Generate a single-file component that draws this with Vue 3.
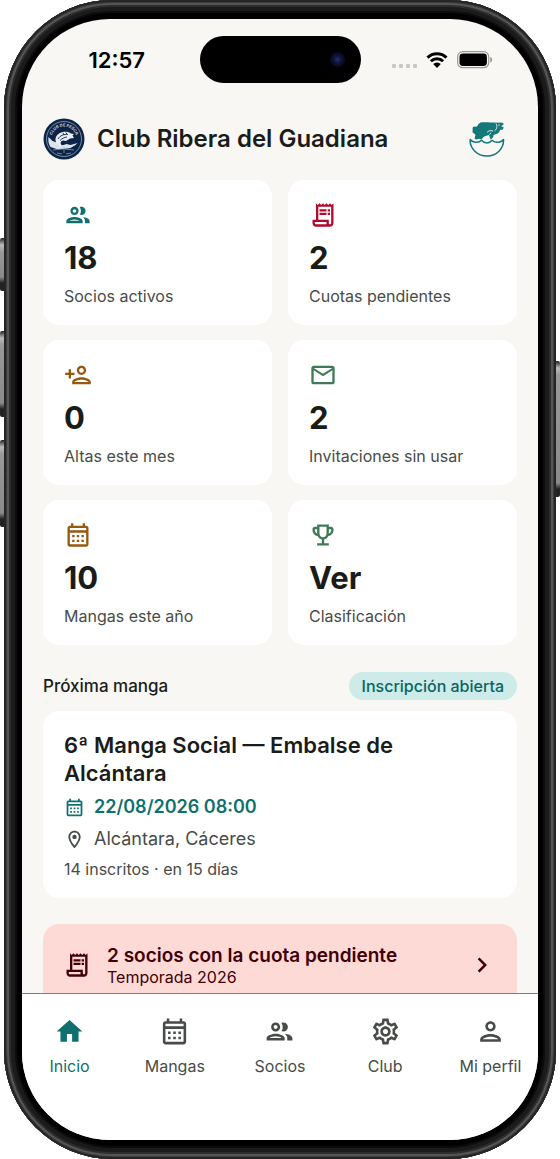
<script setup>

import {ref} from "vue"

const icons = {
    group: "M9 13.75c-2.34 0-7 1.17-7 3.5V19h14v-1.75c0-2.33-4.66-3.5-7-3.5zM4.34 17c.84-.58 2.87-1.25 4.66-1.25s3.82.67 4.66 1.25H4.34zM9 12c1.93 0 3.5-1.57 3.5-3.5S10.93 5 9 5 5.5 6.57 5.5 8.5 7.07 12 9 12zm0-5c.83 0 1.5.67 1.5 1.5S9.83 10 9 10s-1.5-.67-1.5-1.5S8.17 7 9 7zm7.04 6.81c1.16.84 1.96 1.96 1.96 3.44V19h4v-1.75c0-2.02-3.5-3.17-5.96-3.44zM15 12c1.93 0 3.5-1.57 3.5-3.5S16.93 5 15 5c-.54 0-1.04.13-1.5.35.63.89 1 1.98 1 3.15s-.37 2.26-1 3.15c.46.22.96.35 1.5.35z",
    receipt: "M19.5 3.5L18 2l-1.5 1.5L15 2l-1.5 1.5L12 2l-1.5 1.5L9 2 7.5 3.5 6 2v14H3v3c0 1.66 1.34 3 3 3h12c1.66 0 3-1.34 3-3V2l-1.5 1.5zM15 20H6c-.55 0-1-.45-1-1v-1h10v2zm4-1c0 .55-.45 1-1 1s-1-.45-1-1v-3H8V5h11v14zM9 7h6v2H9zM16 7h2v2h-2zM9 10h6v2H9zM16 10h2v2h-2z",
    personAdd: "M15 12c2.21 0 4-1.79 4-4s-1.79-4-4-4-4 1.79-4 4 1.79 4 4 4zm0-6c1.1 0 2 .9 2 2s-.9 2-2 2-2-.9-2-2 .9-2 2-2zm0 8c-2.67 0-8 1.34-8 4v2h16v-2c0-2.66-5.33-4-8-4zm-6 4c.22-.72 3.31-2 6-2 2.7 0 5.8 1.29 6 2H9zm-3-3v-3h3v-2H6V7H4v3H1v2h3v3z",
    mail: "M22 6c0-1.1-.9-2-2-2H4c-1.1 0-2 .9-2 2v12c0 1.1.9 2 2 2h16c1.1 0 2-.9 2-2V6zm-2 0l-8 5-8-5h16zm0 12H4V8l8 5 8-5v10z",
    calendar: "M19 4h-1V2h-2v2H8V2H6v2H5c-1.11 0-1.99.9-1.99 2L3 20c0 1.1.89 2 2 2h14c1.1 0 2-.9 2-2V6c0-1.1-.9-2-2-2zm0 16H5V10h14v10zm0-12H5V6h14v2zM9 14H7v-2h2v2zm4 0h-2v-2h2v2zm4 0h-2v-2h2v2zM9 18H7v-2h2v2zm4 0h-2v-2h2v2zm4 0h-2v-2h2v2z",
    trophy: "M19 5h-2V3H7v2H5c-1.1 0-2 .9-2 2v1c0 2.55 1.92 4.63 4.39 4.94.63 1.5 1.98 2.63 3.61 2.96V19H7v2h10v-2h-4v-3.1c1.63-.33 2.98-1.46 3.61-2.96C19.08 12.63 21 10.55 21 8V7c0-1.1-.9-2-2-2zM5 8V7h2v3.82C5.84 10.4 5 9.3 5 8zm7 6c-1.65 0-3-1.35-3-3V5h6v6c0 1.65-1.35 3-3 3zm7-6c0 1.3-.84 2.4-2 2.82V7h2v1z",
    place: "M12 2C8.13 2 5 5.13 5 9c0 5.25 7 13 7 13s7-7.75 7-13c0-3.87-3.13-7-7-7zM7 9c0-2.76 2.24-5 5-5s5 2.24 5 5c0 2.88-2.88 7.19-5 9.88C9.92 16.21 7 11.85 7 9zM14.5 9a2.5 2.5 0 1 1-5 0 2.5 2.5 0 0 1 5 0z",
    home: "M10 20v-6h4v6h5v-8h3L12 3 2 12h3v8z",
    settings: "M19.43 12.98c.04-.32.07-.64.07-.98 0-.34-.03-.66-.07-.98l2.11-1.65c.19-.15.24-.42.12-.64l-2-3.46c-.09-.16-.26-.25-.44-.25-.06 0-.12.01-.17.03l-2.49 1c-.52-.4-1.08-.73-1.69-.98l-.38-2.65C14.46 2.18 14.25 2 14 2h-4c-.25 0-.46.18-.49.42l-.38 2.65c-.61.25-1.17.59-1.69.98l-2.49-1c-.06-.02-.12-.03-.18-.03-.17 0-.34.09-.43.25l-2 3.46c-.13.22-.07.49.12.64l2.11 1.65c-.04.32-.07.65-.07.98 0 .33.03.66.07.98l-2.11 1.65c-.19.15-.24.42-.12.64l2 3.46c.09.16.26.25.44.25.06 0 .12-.01.17-.03l2.49-1c.52.4 1.08.73 1.69.98l.38 2.65c.03.24.24.42.49.42h4c.25 0 .46-.18.49-.42l.38-2.65c.61-.25 1.17-.59 1.69-.98l2.49 1c.06.02.12.03.18.03.17 0 .34-.09.43-.25l2-3.46c.12-.22.07-.49-.12-.64l-2.11-1.65zm-1.98-1.71c.04.31.05.52.05.73 0 .21-.02.43-.05.73l-.14 1.13.89.7 1.08.84-.7 1.21-1.27-.51-1.04-.42-.9.68c-.43.32-.84.56-1.25.73l-1.06.43-.16 1.13-.2 1.35h-1.4l-.19-1.35-.16-1.13-1.06-.43c-.43-.18-.83-.41-1.23-.71l-.91-.7-1.06.43-1.27.51-.7-1.21 1.08-.84.89-.7-.14-1.13c-.03-.31-.05-.54-.05-.74s.02-.43.05-.73l.14-1.13-.89-.7-1.08-.84.7-1.21 1.27.51 1.04.42.9-.68c.43-.32.84-.56 1.25-.73l1.06-.43.16-1.13.2-1.35h1.39l.19 1.35.16 1.13 1.06.43c.43.18.83.41 1.23.71l.91.7 1.06-.43 1.27-.51.7 1.21-1.07.85-.89.7.14 1.13zM12 8c-2.21 0-4 1.79-4 4s1.79 4 4 4 4-1.79 4-4-1.79-4-4-4zm0 6c-1.1 0-2-.9-2-2s.9-2 2-2 2 .9 2 2-.9 2-2 2z",
    person: "M12 6c1.1 0 2 .9 2 2s-.9 2-2 2-2-.9-2-2 .9-2 2-2m0 10c2.7 0 5.8 1.29 6 2H6c.23-.72 3.31-2 6-2m0-12C9.79 4 8 5.79 8 8s1.79 4 4 4 4-1.79 4-4-1.79-4-4-4zm0 10c-2.67 0-8 1.34-8 4v2h16v-2c0-2.66-5.33-4-8-4z",
    chevron: "M10 6L8.59 7.41 13.17 12l-4.58 4.59L10 18l6-6z",
}

const stats = [
    {icon: "group", color: "teal", value: "18", label: "Socios activos"},
    {icon: "receipt", color: "red", value: "2", label: "Cuotas pendientes"},
    {icon: "personAdd", color: "amber", value: "0", label: "Altas este mes"},
    {icon: "mail", color: "green", value: "2", label: "Invitaciones sin usar"},
    {icon: "calendar", color: "amber", value: "10", label: "Mangas este año"},
    {icon: "trophy", color: "green", value: "Ver", label: "Clasificación"},
]

const tabs = [
    {id: "inicio", icon: "home", label: "Inicio"},
    {id: "mangas", icon: "calendar", label: "Mangas"},
    {id: "socios", icon: "group", label: "Socios"},
    {id: "club", icon: "settings", label: "Club"},
    {id: "perfil", icon: "person", label: "Mi perfil"},
]

const active = ref("inicio")

</script>

<template>
    <div class="device">
        <!-- Side buttons of the phone -->
        <span class="key action"></span>
        <span class="key volumeUp"></span>
        <span class="key volumeDown"></span>
        <span class="key power"></span>

        <div class="frame">
            <div class="screen">
                <div class="status">
                    <span class="time">12:57</span>
                    <div class="island"><span class="lens"></span></div>
                    <div class="signals">
                        <span class="dots"><i></i><i></i><i></i><i></i></span>
                        <svg class="wifi" viewBox="0 0 22 16" aria-hidden="true">
                            <path d="M1.5 5.6a13.6 13.6 0 0 1 19 0M4.9 9.2a8.7 8.7 0 0 1 12.2 0" fill="none" stroke="#000" stroke-width="3" />
                            <path d="M11 16l-3.8-3.9a5.4 5.4 0 0 1 7.6 0z" />
                        </svg>
                        <svg class="battery" viewBox="0 0 36 18" aria-hidden="true">
                            <rect x="0.7" y="0.7" width="31" height="16" rx="5" fill="none" stroke="#999" stroke-width="1.2" />
                            <rect x="2.5" y="2.5" width="27.4" height="12.4" rx="3.4" />
                            <path d="M33.2 6v5.4c1.4-.5 2-1.5 2-2.7s-.6-2.2-2-2.7z" fill="#999" />
                        </svg>
                    </div>
                </div>

                <header>
                    <svg class="crest" viewBox="0 0 42 42" role="img" aria-label="Club de pesca">
                        <defs><path id="crestArc" d="M8.5 21a12.500 12.500 0 0 1 25 0" /></defs>
                        <circle cx="21" cy="21" r="20.5" fill="#0b2447" />
                        <circle cx="21" cy="21" r="17.5" fill="none" stroke="#a9b6c8" stroke-width="0.7" />
                        <text font-size="4" font-weight="700" fill="#c5cfdc" text-anchor="middle"><textPath href="#crestArc" startOffset="50%">CLUB DE PESCA</textPath></text>
                        <path d="M13 24c-2-5 2-9 7-10 3-.6 6 0 8 1.500l3 .5-1.500 1.500 1.500 2.500-4 .5-4 2.500-3-.5c-2 .5-3 2-2 4l3 2-5 .5-3-2z" fill="#e9eef4" />
                        <path d="M5.500 19l4 4 3 1 4 4 4-1 3-1 4 1 7-2-2 2-5 3-7 1-7 0-6-2c-2-3-2.500-6-2-10z" fill="#dbe3ec" />
                        <path d="M15 21c2-3.500 6-5 10-4.500M17 22.500c2-2 4-3 7-3.500M20 15l1 2M23 14.500l1 2" fill="none" stroke="#0b2447" stroke-width="0.9" />
                        <path d="M10 32l10-1M22 31l9 1M21 29v6M14 35l5 1M23 36l5-1" fill="none" stroke="#8fa1b8" stroke-width="0.8" />
                    </svg>
                    <h1>Club Ribera del Guadiana</h1>
                    <svg class="brand" viewBox="0 0 36 36" aria-hidden="true">
                        <path d="M8 5.5C9 3.500 10 2.200 11.500 1.500 16 1 20 1.800 24 1.500L34 1.800l.6 1.600L32 5.300l2.600.7-.6 2.500-3 .5c-.5 1.700-1.200 2.800-2.500 3.500L24.500 14c.3 1.500-.8 3.200-3 4.500L20 14l-3.500 1-2 1-2 2.500-2.500-.8-2.500.8-2-.8 1-4-3-2.500C4 9.500 3.200 7.500 4 5.700z" fill="#14787a" />
                        <path d="M27 2.500c1.600 2.500 1 5.500-1.500 7.500M18 11.500c1.500-2 4-2.200 6-1.500M20.500 13.500l1.500-1.700" fill="none" stroke="#f8f7f3" stroke-width="0.9" />
                        <circle cx="30" cy="4" r="0.7" fill="#f8f7f3" />
                        <path d="M1.200 18.500C3 21 9 23 12.500 19.300c3 3.500 8 3.500 10.500 0 4 3.700 10 1.700 11.500-.8C35 27 28 35 18 35S.5 27 1.200 18.500z" fill="none" stroke="#14787a" stroke-width="1.5" stroke-linejoin="round" />
                    </svg>
                </header>

                <main>
                    <section class="stats">
                        <a v-for="stat in stats" :key="stat.label" class="card stat" href="#">
                            <svg class="icon" :class="stat.color" viewBox="0 0 24 24" aria-hidden="true"><path :d="icons[stat.icon]" /></svg>
                            <strong>{{ stat.value }}</strong>
                            <span>{{ stat.label }}</span>
                        </a>
                    </section>

                    <div class="sectionHead">
                        <h2>Próxima manga</h2>
                        <span class="pill">Inscripción abierta</span>
                    </div>

                    <article class="card event">
                        <h3>6ª Manga Social — Embalse de Alcántara</h3>
                        <p class="line date">
                            <svg viewBox="0 0 24 24" aria-hidden="true"><path :d="icons.calendar" /></svg>
                            22/08/2026 08:00
                        </p>
                        <p class="line">
                            <svg viewBox="0 0 24 24" aria-hidden="true"><path :d="icons.place" /></svg>
                            Alcántara, Cáceres
                        </p>
                        <p class="meta">14 inscritos · en 15 días</p>
                    </article>

                    <button class="alert" type="button">
                        <svg class="icon" viewBox="0 0 24 24" aria-hidden="true"><path :d="icons.receipt" /></svg>
                        <span class="alertText">
                            <strong>2 socios con la cuota pendiente</strong>
                            <span>Temporada 2026</span>
                        </span>
                        <svg class="chevron" viewBox="0 0 24 24" aria-hidden="true"><path :d="icons.chevron" /></svg>
                    </button>
                </main>

                <nav>
                    <div class="tabs">
                        <a v-for="tab in tabs" :key="tab.id" :href="'#' + tab.id" :class="{active: active === tab.id}" @click="active = tab.id">
                            <svg viewBox="0 0 24 24" aria-hidden="true"><path :d="icons[tab.icon]" /></svg>
                            {{ tab.label }}
                        </a>
                    </div>
                </nav>
            </div>
        </div>
    </div>
</template>

<style>

body {
    margin: 0;
    background: white;
}

</style>

<style scoped>

.device {
    position: relative;
    box-sizing: border-box;
    height: 100vh;
    padding: 0 4px;
    font-family: Inter, "Liberation Sans", sans-serif;
    color: #1a1c1a;
}

.frame {
    position: relative;
    box-sizing: border-box;
    height: 100%;
    padding: 19px 18px;
    border-radius: 108px;
    background: black;
    box-shadow: inset 0 0 0 2px #252525, inset 0 0 0 3px #3c3c3c, inset 0 0 0 5px #555, inset 0 0 0 7px #2c2c2c, inset 0 0 0 11px #1b1b1b, inset 0 0 0 13px #0c0c0c;
}

.key {
    position: absolute;
    left: 0;
    width: 8px;
    border-radius: 2px;
    background: linear-gradient(#222, #bbb 7px, #999 14px, #8a8a8a calc(100% - 14px), #222 calc(100% - 8px));
}

.action {
    top: 238px;
    height: 53px;
}

.volumeUp {
    top: 331px;
    height: 86px;
}

.volumeDown {
    top: 440px;
    height: 87px;
}

.power {
    left: auto;
    right: 0;
    top: 361px;
    height: 136px;
}

.screen {
    display: flex;
    flex-direction: column;
    height: 100%;
    overflow: hidden;
    border-radius: 88px;
    background: #f8f7f3;
}

svg {
    display: block;
    flex: none;
    fill: currentColor;
}

.status {
    display: grid;
    grid-template-columns: 1fr 161px 1fr;
    align-items: center;
    padding-top: 17px;
    color: black;
}

.time {
    padding-left: 12px;
    text-align: center;
    font-size: 22px;
    font-weight: 600;
}

.island {
    display: flex;
    align-items: center;
    justify-content: flex-end;
    box-sizing: border-box;
    height: 47px;
    padding-right: 16px;
    border-radius: 24px;
    background: black;
}

.lens {
    width: 15px;
    height: 15px;
    border-radius: 50%;
    background: radial-gradient(circle, #23306f 0, #10143a 35%, #080a1c 65%, #030308 100%);
}

.signals {
    display: flex;
    align-items: center;
    gap: 9px;
    padding-left: 31px;
}

.dots {
    display: flex;
    gap: 3px;
    padding-top: 12px;
}

.dots i {
    width: 4px;
    height: 4px;
    border-radius: 1px;
    background: #c9c8c5;
}

.wifi {
    width: 22px;
    height: 16px;
}

.battery {
    width: 36px;
    height: 18px;
}

header {
    display: flex;
    align-items: center;
    gap: 12px;
    padding: 35px 33px 20px 21px;
}

.crest {
    width: 42px;
    height: 42px;
}

h1 {
    flex: 1;
    margin: 0;
    font-size: 24px;
    font-weight: 600;
    line-height: 32px;
}

.brand {
    width: 36px;
    height: 36px;
}

main {
    flex: 1;
    min-height: 0;
    overflow: hidden;
    padding: 0 21px;
}

.card {
    border-radius: 16px;
    background: white;
}

.stats {
    display: grid;
    grid-template-columns: 1fr 1fr;
    gap: 15px 16px;
}

.stat {
    display: flex;
    flex-direction: column;
    padding: 21px 21px 18px;
    color: inherit;
    text-decoration: none;
}

.icon {
    width: 28px;
    height: 28px;
}

.teal {
    color: #10706e;
}

.red {
    color: #b00b2d;
}

.amber {
    color: #96590f;
}

.green {
    color: #3f7a56;
}

.stat strong {
    margin: 8px 0 6px;
    font-size: 31px;
    font-weight: 700;
    line-height: 42px;
}

.stat span {
    font-size: 16px;
    line-height: 22px;
    color: #474c48;
}

.sectionHead {
    display: flex;
    align-items: center;
    justify-content: space-between;
    margin: 27px 0 11px;
}

h2 {
    margin: 0;
    font-size: 17px;
    font-weight: 500;
    line-height: 24px;
}

.pill {
    padding: 0 13px;
    border-radius: 14px;
    background: #cdebe8;
    color: #0a6462;
    font-size: 16px;
    font-weight: 500;
    line-height: 28px;
}

.event {
    padding: 20px 21px 18px;
}

h3 {
    max-width: 360px;
    margin: 0;
    font-size: 22px;
    font-weight: 600;
    line-height: 28px;
}

.line {
    display: flex;
    align-items: center;
    gap: 9px;
    margin: 8px 0 0;
    font-size: 18px;
    line-height: 24px;
    color: #474c48;
}

.line svg {
    width: 21px;
    height: 21px;
}

.date {
    font-weight: 600;
    color: #10706e;
}

.meta {
    margin: 7px 0 0;
    font-size: 16px;
    line-height: 22px;
    color: #474c48;
}

.alert {
    display: flex;
    align-items: center;
    gap: 16px;
    width: 100%;
    margin: 26px 0;
    padding: 20px;
    border: 0;
    border-radius: 16px;
    background: #fedad6;
    color: #410006;
    font-family: inherit;
    text-align: left;
}

.alertText {
    flex: 1;
    font-size: 16px;
    line-height: 18px;
}

.alertText strong,
.alertText span {
    display: block;
}

.alertText strong {
    font-size: 19px;
    font-weight: 600;
    line-height: 24px;
}

.chevron {
    width: 30px;
    height: 30px;
}

nav {
    border-top: 1px solid #7b7f7b;
    background: white;
}

.tabs {
    display: grid;
    grid-template-columns: repeat(5, 1fr);
    margin: 0 -5px;
    padding: 22px 0 64px;
}

.tabs a {
    display: flex;
    flex-direction: column;
    align-items: center;
    gap: 9px;
    font-size: 16px;
    line-height: 20px;
    color: #474c48;
    text-decoration: none;
}

.tabs svg {
    width: 31px;
    height: 31px;
}

.tabs .active {
    color: #10706e;
}

</style>
